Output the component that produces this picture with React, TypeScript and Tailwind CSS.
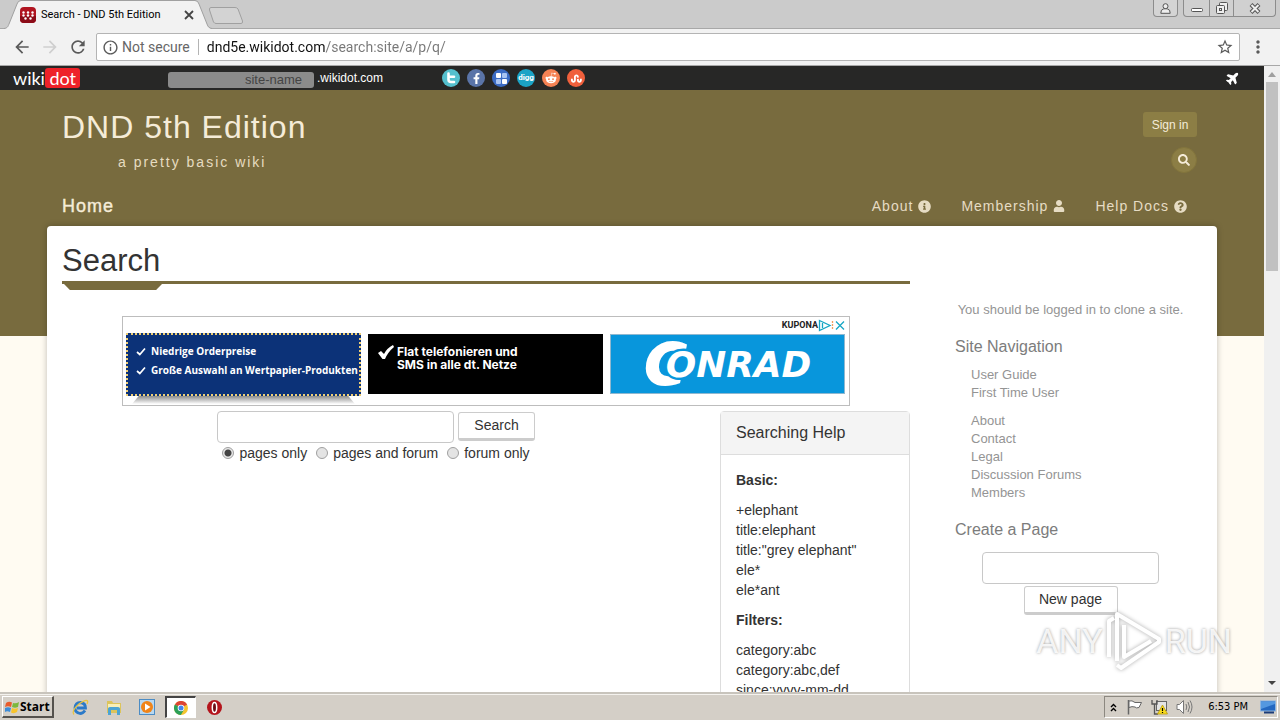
import type { ReactNode } from 'react'
import { FaFacebookF, FaInfoCircle, FaPlane, FaQuestionCircle, FaRedditAlien, FaSearch, FaStumbleupon, FaUser } from 'react-icons/fa'
import { MdArrowBack, MdArrowForward, MdInfoOutline, MdMoreVert, MdRefresh, MdStarBorder } from 'react-icons/md'

const siteLinks = ['User Guide', 'First Time User']
const aboutLinks = ['About', 'Contact', 'Legal', 'Discussion Forums', 'Members']

const helpBasic = ['+elephant', 'title:elephant', 'title:"grey elephant"', 'ele*', 'ele*ant']
const helpFilters = ['category:abc', 'category:abc,def', 'since:yyyy-mm-dd']

const topMenu = [
  { label: 'About', icon: <FaInfoCircle size={13} /> },
  { label: 'Membership', icon: <FaUser size={12} /> },
  { label: 'Help Docs', icon: <FaQuestionCircle size={13} /> },
]

const scopes = ['pages only', 'pages and forum', 'forum only']

function TabStrip() {
  return (
    <div className="flex h-7 shrink-0 items-start justify-between bg-[#cbcbcb] pl-1">
      <div className="flex items-start">
        <div className="relative flex h-[29px] w-[208px] items-center pl-4">
          <svg className="absolute inset-0" width="208" height="29" viewBox="0 0 208 29">
            <path d="M0 29C4 28 4 26 5 24L13 4Q14 1 17 1H191Q194 1 195 4L203 24C204 27 205 28 208 29Z" fill="#f2f2f2" />
            <path d="M0 28.5C4 28 4 26 5 24L13 4Q14 .5 17 .5H191Q194 .5 195 4L203 24C204 27 205 28 208 28.5" fill="none" stroke="#a0a0a0" />
          </svg>
          <svg className="relative" width="16" height="16" viewBox="0 0 16 16">
            <rect width="16" height="16" rx="4" fill="#b01420" />
            <path d="M0 9H16V12Q16 16 12 16H4Q0 16 0 12Z" fill="#8c0c18" />
            <g fill="#fff">
              <circle cx="3.5" cy="5.5" r="1.2" />
              <circle cx="8" cy="5.5" r="1.2" />
              <circle cx="12.5" cy="5.5" r="1.2" />
              <circle cx="3.5" cy="8.5" r="1.2" />
              <circle cx="8" cy="8.5" r="1.2" />
              <circle cx="12.5" cy="8.5" r="1.2" />
              <circle cx="5.5" cy="11.5" r="1.2" />
              <circle cx="10.5" cy="11.5" r="1.2" />
            </g>
          </svg>
          <span className="relative ml-[5px] flex-1 whitespace-nowrap font-['Roboto',sans-serif] text-[11px] text-black">
            Search - DND 5th Edition
          </span>
          <button type="button" aria-label="Close tab" className="relative mr-[18px]">
            <svg width="10" height="10" viewBox="0 0 10 10" stroke="#444" strokeWidth="1.8">
              <path d="M1 1L9 9M9 1L1 9" />
            </svg>
          </button>
        </div>
        <button type="button" aria-label="New tab" className="-ml-1 mt-[7px]">
          <svg width="36" height="17" viewBox="0 0 36 17" fill="#d3d3d3" stroke="#a0a0a0">
            <path d="M3 .5H27Q29 .5 30 2L34.500 14Q35 16.500 33 16.500H8Q6.500 16.500 5.500 15L1.500 3Q1 .5 3 .5Z" />
          </svg>
        </button>
      </div>
      <div className="flex items-start gap-[5px] pr-1 text-[#555]">
        <button type="button" aria-label="Profile" className="flex h-[17px] w-[25px] items-center justify-center rounded-b border border-t-0 border-[#8c8c8c] bg-[#d4d4d4]">
          <svg width="11" height="11" viewBox="0 0 11 11" fill="#eee" stroke="#555">
            <circle cx="5.500" cy="3.200" r="2.500" />
            <path d="M.8 10.300Q.5 6.500 3.800 5.800H7.200Q10.500 6.500 10.200 10.300Z" />
          </svg>
        </button>
        <div className="flex h-[17px] rounded-b border border-t-0 border-[#8c8c8c] bg-[#d0d0d0]">
          <button type="button" aria-label="Minimize" className="flex w-[25px] items-end justify-center pb-1">
            <svg width="12" height="4" viewBox="0 0 12 4">
              <rect x=".5" y=".5" width="11" height="3" rx="1" fill="#fff" stroke="#555" />
            </svg>
          </button>
          <button type="button" aria-label="Restore" className="flex w-[25px] items-center justify-center border-x border-[#8c8c8c]">
            <svg width="12" height="13" viewBox="0 0 12 13" fill="#eee" stroke="#555">
              <rect x="3.500" y=".5" width="8" height="8" rx="1" />
              <rect x=".5" y="3.500" width="8" height="8" rx="1" />
              <rect x="3.500" y="6.500" width="2" height="2" />
            </svg>
          </button>
          <button type="button" aria-label="Close" className="flex w-[41px] items-center justify-center">
            <svg width="12" height="11" viewBox="0 0 12 11">
              <path d="M2 1.500L10 9.500M10 1.500L2 9.500" stroke="#555" strokeWidth="4" />
              <path d="M2.500 2L9.500 9M9.500 2L2.500 9" stroke="#eee" strokeWidth="2" />
            </svg>
          </button>
        </div>
      </div>
    </div>
  )
}

function Toolbar() {
  return (
    <div className="flex h-[38px] shrink-0 items-center border-b border-t border-[#a8a8a8] bg-[#f2f2f2] pl-3 text-[#5a5a5a]">
      <button type="button" aria-label="Back"><MdArrowBack size={20} /></button>
      <button type="button" aria-label="Forward" className="ml-2 text-[#cfcfcf]"><MdArrowForward size={20} /></button>
      <button type="button" aria-label="Reload" className="ml-2"><MdRefresh size={20} /></button>
      <div className="ml-2 flex h-7 flex-1 items-center rounded-xs border border-[#b4b4b4] bg-white px-[5px] font-['Roboto',sans-serif] text-sm">
        <MdInfoOutline size={17} />
        <span className="ml-[3px] text-[#666]">Not secure</span>
        <span className="mx-2 h-4 w-px bg-[#b4b4b4]" />
        <input
          aria-label="Address"
          defaultValue="dnd5e.wikidot.com/search:site/a/p/q/"
          className="min-w-0 flex-1 bg-[linear-gradient(90deg,#111_118px,#777_118px)] bg-clip-text text-transparent outline-none"
        />
        <button type="button" aria-label="Bookmark this page"><MdStarBorder size={18} /></button>
      </div>
      <button type="button" aria-label="Menu" className="ml-2 mr-3"><MdMoreVert size={20} /></button>
    </div>
  )
}

function Badge({ color, label, children }: { color: string; label: string; children: ReactNode }) {
  return (
    <a href="#" aria-label={label} className={`flex size-[18px] items-center justify-center rounded-full text-white ${color}`}>
      {children}
    </a>
  )
}

function WikidotBar() {
  return (
    <div className="flex h-6 items-center bg-[#272726] pl-[13px] text-white">
      <a href="#" className="flex w-[67px] items-center justify-between font-['Lato',sans-serif] text-lg leading-5">
        <span>wiki</span>
        <span className="rounded-[3px] bg-[#ee2229] px-1">dot</span>
      </a>
      <input
        aria-label="Site name"
        defaultValue="site-name"
        className="ml-[88px] mt-1 h-4 w-[146px] rounded-[3px] bg-[#8b8b8b] pr-3 text-right text-[13px] text-[#444] outline-none"
      />
      <span className="ml-[3px] text-xs">.wikidot.com</span>
      <div className="ml-[59px] flex gap-[7px]">
        <Badge color="bg-[#55c0ce]" label="Twitter">
          <svg width="10" height="12" viewBox="0 0 10 12" fill="none" stroke="#fff" strokeWidth="2.600" strokeLinecap="round">
            <path d="M2.500 1.500V7.500Q2.500 10 5 10H8M2.500 4.800H8" />
          </svg>
        </Badge>
        <Badge color="bg-[#5a74a8]" label="Facebook"><FaFacebookF size={11} /></Badge>
        <Badge color="bg-[#3c6cc4]" label="Delicious">
          <svg width="11" height="11" viewBox="0 0 11 11">
            <rect width="5" height="5" rx="1" fill="#fff" />
            <rect x="6" width="5" height="5" rx="1" fill="#a9c4f2" />
            <rect y="6" width="5" height="5" rx="1" fill="#a9c4f2" />
            <rect x="6" y="6" width="5" height="5" rx="1" fill="#fff" />
          </svg>
        </Badge>
        <Badge color="bg-[#1ba3c6]" label="Digg">
          <span className="font-['Roboto',sans-serif] text-[8px] font-bold leading-none">digg</span>
        </Badge>
        <Badge color="bg-[#f58254]" label="Reddit"><FaRedditAlien size={12} /></Badge>
        <Badge color="bg-[#f0603c]" label="StumbleUpon"><FaStumbleupon size={11} /></Badge>
      </div>
      <a href="#" aria-label="Fly" className="ml-auto mr-6 -rotate-45"><FaPlane size={14} /></a>
    </div>
  )
}

function Header() {
  return (
    <header className="text-[#f5ecd8]">
      <div className="flex justify-between pl-[15px] pr-5">
        <div className="pt-[17px]">
          <a href="#" className="block text-[32px] leading-10 tracking-[1px]">DND 5th Edition</a>
          <p className="ml-14 mt-[5px] text-sm leading-5 tracking-[2px] text-[#e6dcc0]">a pretty basic wiki</p>
        </div>
        <div className="flex flex-col items-end pt-[22px]">
          <button type="button" className="h-[25px] w-[54px] rounded-[3px] bg-[#8c7e45] text-xs">Sign in</button>
          <button type="button" aria-label="Search" className="mt-2.5 flex size-[26px] items-center justify-center rounded-full border border-[#83753c] bg-[#8c7e45]">
            <FaSearch size={12} />
          </button>
        </div>
      </div>
      <nav className="mt-[19px] flex items-start justify-between pb-1.5 pl-[15px] pr-[30px]">
        <a href="#" className="text-lg leading-7 tracking-[1px] [-webkit-text-stroke:0.4px]">Home</a>
        <div className="flex gap-[30px] text-sm leading-7 tracking-[1px] text-[#e6dcc4]">
          {topMenu.map((item) => (
            <a key={item.label} href="#" className="flex items-center gap-[5px]">
              {item.label}
              {item.icon}
            </a>
          ))}
        </div>
      </nav>
    </header>
  )
}

function AdTick() {
  return (
    <svg width="10" height="10" viewBox="0 0 10 10" className="shrink-0" fill="none" stroke="#fff" strokeWidth="1.700">
      <path d="M1 5L3.800 7.500L9 1.500" />
    </svg>
  )
}

function AdBanner() {
  return (
    <aside className="mx-auto mt-[26px] flex h-[90px] w-full max-w-[728px] flex-col border border-[#bdbdbd] pl-[3px] pr-1">
      <div className="flex h-4 shrink-0 items-center justify-end font-['Roboto',sans-serif] text-[9px] font-bold text-[#222]">
        KUPONA
        <svg width="27" height="13" viewBox="0 0 27 13" fill="none" stroke="#16a6c4" strokeWidth="1.300">
          <path d="M1.500 1.500L12 6.500L1.500 11.500Z" />
          <path d="M4.500 4V9" />
          <path d="M14.500 2V11" stroke="#f0a060" strokeDasharray="2 1" />
          <path d="M18 2.500L26 10.500M26 2.500L18 10.500" />
        </svg>
      </div>
      <div className="grid grid-cols-3 gap-[7px]">
        <div>
          <div className="flex h-[63px] flex-col gap-1 whitespace-nowrap border-2 border-dotted border-[#efcf74] bg-[#0c3278] pl-2 pt-[9px] font-['Open_Sans',sans-serif] text-[10px] font-bold leading-[15px] text-white">
            <span className="flex items-center gap-[5px]"><AdTick />Niedrige Orderpreise</span>
            <span className="flex items-center gap-[5px]"><AdTick />Große Auswahl an Wertpapier-Produkten</span>
          </div>
          <div className="mx-1.5 h-2 bg-linear-to-b from-[#8c8c8c] to-white [clip-path:polygon(0_100%,3%_0,97%_0,100%_100%)]" />
        </div>
        <div className="mt-px flex h-[60px] gap-[3px] bg-black pl-2.5 pt-[11px] font-['Inter',sans-serif] text-xs font-bold leading-[13px] text-white">
          <svg width="16" height="15" viewBox="0 0 16 15" fill="#fff" className="shrink-0">
            <path d="M0 8L3 6L6 9Q9 3 15 0L16 2Q10 7 7 14H4.500Z" />
          </svg>
          <p>Flat telefonieren und<br />SMS in alle dt. Netze</p>
        </div>
        <div className="mt-px h-[60px] border border-[#8fb8d0] bg-[#0896dc]">
          <svg width="100%" height="58" viewBox="0 0 234 58" role="img" aria-label="Conrad" fontFamily="DejaVu Sans" fontWeight="bold" fontStyle="italic" fill="#fff">
            <text x="34" y="50" fontSize="57" stroke="#fff" strokeWidth="2">C</text>
            <text x="55" y="42" fontSize="36" stroke="#0896dc" strokeWidth="5" paintOrder="stroke">ONRAD</text>
          </svg>
        </div>
      </div>
    </aside>
  )
}

function SearchForm() {
  return (
    <form className="flex-1">
      <div className="flex items-start justify-center gap-1">
        <input aria-label="Search text" className="h-8 w-[237px] rounded border border-[#c8c8c8] px-2 outline-none" />
        <button type="button" className="mt-px h-[29px] rounded-[3px] border border-b-3 border-[#ccc] bg-white px-[15px] pb-0.5 leading-5">Search</button>
      </div>
      <div className="flex justify-center gap-[9px]">
        {scopes.map((scope, i) => (
          <label key={scope} className="flex h-5 items-center gap-[5px]">
            <input
              type="radio"
              name="scope"
              defaultChecked={i === 0}
              className="size-3 appearance-none rounded-full border border-[#a0a0a0] bg-[#e4e4e4] checked:bg-[radial-gradient(#444_0_3px,#e8e8e8_4px)]"
            />
            {scope}
          </label>
        ))}
      </div>
    </form>
  )
}

function HelpList({ title, items }: { title: string; items: string[] }) {
  return (
    <>
      <p className="mb-2.5 font-bold">{title}</p>
      <p className="mb-2.5">
        {items.map((item) => (
          <span key={item} className="block">{item}</span>
        ))}
      </p>
    </>
  )
}

function Sidebar() {
  return (
    <aside className="w-[292px] shrink-0 pl-[30px] pr-[31px] pt-[60px] text-[13px] leading-[18px] text-[#949494]">
      <p className="whitespace-nowrap text-center">You should be logged in to clone a site.</p>
      <h2 className="mt-4 text-base leading-6 text-[#7c7c7c]">Site Navigation</h2>
      <ul className="mt-[7px] pl-4">
        {siteLinks.map((link) => (
          <li key={link}><a href="#">{link}</a></li>
        ))}
      </ul>
      <ul className="mt-2.5 pl-4">
        {aboutLinks.map((link) => (
          <li key={link}><a href="#">{link}</a></li>
        ))}
      </ul>
      <h2 className="mt-4 text-base leading-6 text-[#7c7c7c]">Create a Page</h2>
      <form className="mt-2.5 flex flex-col items-center gap-0.5 text-sm text-[#333]">
        <input aria-label="Page name" className="h-8 w-[177px] rounded border border-[#c8c8c8] px-2 outline-none" />
        <button type="button" className="h-[29px] w-[94px] rounded-[3px] border border-b-3 border-[#ccc] bg-white pb-0.5">New page</button>
      </form>
    </aside>
  )
}

function Scrollbar() {
  return (
    <div className="flex w-4 shrink-0 flex-col items-center bg-[#f0f0f0]">
      <svg width="16" height="16" viewBox="0 0 16 16" fill="#a0a0a0"><path d="M4 11L8 6L12 11Z" /></svg>
      <div className="h-[189px] w-3 bg-[#c1c1c1]" />
      <svg className="mt-auto" width="16" height="18" viewBox="0 0 16 18" fill="#444"><path d="M4 7L8 11L12 7Z" /></svg>
    </div>
  )
}

function Watermark() {
  return (
    <div className="pointer-events-none absolute bottom-[47px] right-12 flex items-center gap-0.5 font-['Roboto',sans-serif] text-[34px] leading-[64px] text-white/85 [text-shadow:0_0_3px_#999]">
      <span>ANY</span>
      <svg width="58" height="64" viewBox="0 0 58 64" fill="none" stroke="#fff" strokeWidth="4" strokeLinejoin="round" className="drop-shadow-[0_0_2px_#aaa]">
        <path d="M4 48V12L9 9" />
        <path d="M12 52V5L54 30V33L16 59L12 56" />
        <path d="M19 16V48L46 32" />
      </svg>
      <span>RUN</span>
    </div>
  )
}

function Taskbar() {
  return (
    <footer className="flex h-7 shrink-0 items-center border-t-2 border-[#c8c4bc] bg-[#d4cfc7] pl-0.5 font-['DejaVu_Sans_Condensed','DejaVu_Sans',sans-serif] text-[11px] text-black shadow-[inset_0_1px_0_#f4f2ee]">
      <button type="button" className="flex h-[22px] w-13 items-center gap-px border border-b-2 border-r-2 border-[#55524d] border-l-white border-t-white pl-0.5 font-['Open_Sans',sans-serif] text-xs font-bold">
        <svg width="14" height="14" viewBox="0 0 14 14" className="shrink-0">
          <path d="M1 3Q4 1 7 2.500L6 7Q3 5.500 0 7Z" fill="#e85c2c" />
          <path d="M8 3Q11 4 14 2L13 7Q10 8.500 7 7Z" fill="#7cb83c" />
          <path d="M0 8Q3 6.500 6 8L5 12Q2 10.500 0 12Z" fill="#3c8cd8" />
          <path d="M7 8Q10 9.500 13 8L12 12Q9 14 6 12.500Z" fill="#f8c42c" />
        </svg>
        Start
      </button>
      <div className="ml-2.5 flex items-center">
        <button type="button" aria-label="Internet Explorer" className="flex w-[33px] justify-center">
          <svg width="17" height="17" viewBox="0 0 17 17" fill="none">
            <path d="M13 11.500Q11 14.500 8 14.500Q3 13.500 3 9Q3.500 3.500 8.500 3.500Q13.500 4 13.500 9H5" stroke="#2b7ac8" strokeWidth="2.800" />
            <path d="M2 15.500Q-1 12 7 5Q14 0 15.500 2Q16 3 15 5" stroke="#e8c440" strokeWidth="1.300" />
          </svg>
        </button>
        <button type="button" aria-label="Explorer" className="flex w-[33px] justify-center">
          <svg width="16" height="16" viewBox="0 0 16 16">
            <path d="M1 2H6L7 4H15V14H1Z" fill="#dcc45c" />
            <path d="M2 5H14V9H2Z" fill="#f8efb8" />
            <path d="M2 16V10Q2 8 4 8H12Q14 8 14 10V16H11V11H5V16Z" fill="#4ca4d4" />
          </svg>
        </button>
        <button type="button" aria-label="Media Player" className="flex w-[34px] justify-center">
          <svg width="16" height="16" viewBox="0 0 16 16">
            <rect x=".5" y=".5" width="15" height="15" fill="#b8d8f0" stroke="#4c8cc4" />
            <circle cx="8" cy="8" r="6" fill="#f08418" />
            <path d="M6 4.500L11.500 8L6 11.500Z" fill="#fff" />
          </svg>
        </button>
        <button type="button" aria-label="Chrome" className="ml-px flex h-[22px] w-[31px] items-center justify-center border border-l-2 border-t-2 border-white border-l-[#444] border-t-[#444] bg-white">
          <svg width="14" height="14" viewBox="0 0 14 14">
            <circle cx="7" cy="7" r="7" fill="#f4c430" />
            <path d="M7 7L.9 3.500A7 7 0 0 1 13.100 3.500Z" fill="#dc4434" />
            <path d="M7 7L.9 3.500A7 7 0 0 0 6.800 14L10 8.700Z" fill="#2ca058" />
            <circle cx="7" cy="7" r="3.300" fill="#fff" />
            <circle cx="7" cy="7" r="2.500" fill="#4484ec" />
          </svg>
        </button>
        <button type="button" aria-label="Opera" className="ml-[11px]">
          <svg width="15" height="15" viewBox="0 0 15 15">
            <circle cx="7.500" cy="7.500" r="7.500" fill="#b4141c" />
            <ellipse cx="7.500" cy="7.500" rx="2.200" ry="5" fill="#6c0c14" stroke="#fff" strokeWidth="1.500" />
          </svg>
        </button>
      </div>
      <div className="ml-auto mr-0.5 flex h-[22px] items-center border border-b-white border-l-[#8c8880] border-r-white border-t-[#8c8880] pl-[5px] pr-px">
        <svg width="7" height="9" viewBox="0 0 7 9" fill="none" stroke="#000" strokeWidth="1.400">
          <path d="M1 4L3.500 1.500L6 4M1 8L3.500 5.500L6 8" />
        </svg>
        <svg className="ml-2.5" width="16" height="16" viewBox="0 0 16 16" fill="#fff" stroke="#666">
          <path d="M1.500 1V15.500" strokeWidth="1.500" />
          <path d="M2 2Q5 1 8 3.500H14.500L12 8.500Q9 9.500 8 8Q5 7 2 8.500Z" />
        </svg>
        <svg className="ml-2" width="17" height="16" viewBox="0 0 17 16">
          <rect x="5.500" y="2.500" width="10" height="9" fill="#e4e4e4" stroke="#666" />
          <path d="M1 1V5H6V1M3.500 5V15H7" stroke="#555" fill="none" strokeWidth="1.300" />
          <path d="M11.500 6L16.500 15H6.500Z" fill="#f8dc1c" stroke="#b8980c" strokeWidth=".8" />
          <path d="M11.500 9V12M11.500 13V14" stroke="#000" strokeWidth="1.200" />
        </svg>
        <svg className="ml-2" width="17" height="16" viewBox="0 0 17 16" fill="#fff" stroke="#777">
          <path d="M1 5.500H3.500L7.500 1.500V14.500L3.500 10.500H1Z" />
          <path d="M10 5Q11.500 8 10 11M12 3Q15 8 12 13M14 1.500Q18 8 14 14.500" fill="none" />
        </svg>
        <span className="ml-[15px] whitespace-nowrap">6:53 PM</span>
        <svg className="ml-3" width="16" height="14" viewBox="0 0 16 14">
          <rect x=".5" y="1" width="15" height="10" fill="#2468c0" stroke="#8cb4e0" />
          <path d="M1 1.500H15V4L1 9Z" fill="#5498e0" />
          <path d="M4 12.500H14" stroke="#1c3c78" strokeWidth="2" />
        </svg>
      </div>
    </footer>
  )
}

export default function App() {
  return (
    <div className="relative flex h-screen flex-col overflow-hidden font-['Liberation_Sans',Arial,sans-serif] text-sm text-[#333]">
      <TabStrip />
      <Toolbar />
      <div className="flex min-h-0 flex-1">
        <div className="min-w-0 flex-1 overflow-hidden">
          <WikidotBar />
          <div className="bg-[linear-gradient(#786b3e_246px,#fffbf2_246px)]">
            <div className="mx-auto max-w-[1170px]">
              <Header />
              <div className="flex rounded bg-white pl-[15px] pt-[15px] shadow-[0_0_6px_rgba(0,0,0,0.25)]">
                <main className="min-w-0 flex-1">
                  <h1 className="border-b-3 border-[#786b3e] text-[31px] leading-10">Search</h1>
                  <div className="ml-0.5 h-1.5 w-[98px] bg-[#786b3e] [clip-path:polygon(0_0,100%_0,94%_100%,6%_100%)]" />
                  <AdBanner />
                  <div className="mt-[5px] flex items-start">
                    <SearchForm />
                    <section className="ml-[30px] w-[190px] rounded border border-[#ddd]">
                      <h2 className="border-b border-[#ddd] bg-[#f4f4f4] px-[15px] py-2.5 text-base leading-[22px]">Searching Help</h2>
                      <div className="p-[15px] leading-5">
                        <HelpList title="Basic:" items={helpBasic} />
                        <HelpList title="Filters:" items={helpFilters} />
                      </div>
                    </section>
                  </div>
                </main>
                <div className="ml-[15px]">
                  <Sidebar />
                </div>
              </div>
            </div>
          </div>
        </div>
        <Scrollbar />
      </div>
      <Taskbar />
      <Watermark />
    </div>
  )
}
